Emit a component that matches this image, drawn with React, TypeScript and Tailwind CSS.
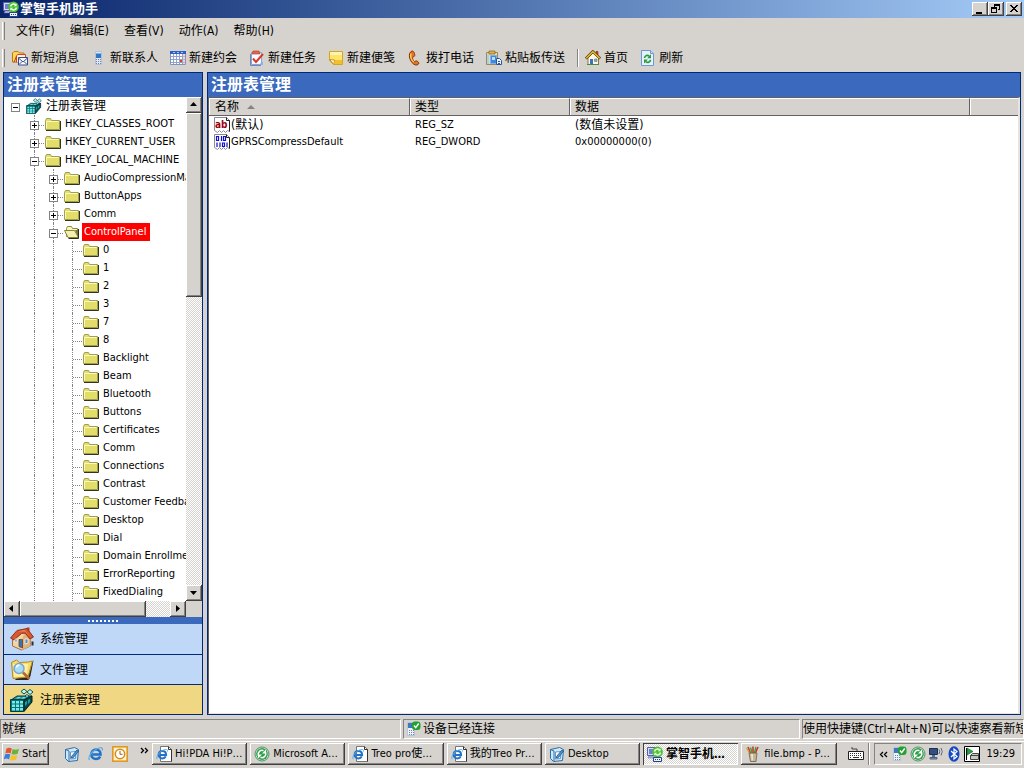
import type { ReactNode } from "react";
import clsx from "clsx";

const raised =
  "bg-[#d6d3ce] shadow-[inset_-1px_-1px_#404040,inset_1px_1px_#ffffff,inset_-2px_-2px_#848284]";
const checker =
  "bg-[conic-gradient(#ffffff_25%,#d6d3ce_0_50%,#ffffff_0_75%,#d6d3ce_0)] bg-[size:2px_2px]";

function Svg({ children, size = 16, box = 16 }: { children: ReactNode; size?: number; box?: number }) {
  return (
    <svg width={size} height={size} viewBox={`0 0 ${box} ${box}`} className="block shrink-0" aria-hidden>
      {children}
    </svg>
  );
}

/* ---------- icons ---------- */

const AppIcon = () => (
  <Svg>
    <path d="M0.5 1.5h9v8h-9z" fill="#d8dcf4" stroke="#5560a8" />
    <path d="M2 3h6v5H2z" fill="#6d7fd0" />
    <path d="M2 10h6l1 2H1z" fill="#b9bfe0" stroke="#5560a8" strokeWidth=".5" />
    <circle cx="10.500" cy="6" r="5.400" fill="#4fc035" />
    <path d="M7.500 5.500a3 3 0 0 1 5.300-1.300M13.500 6.500a3 3 0 0 1-5.300 1.300" stroke="#e8ffe0" strokeWidth="1.500" fill="none" />
    <path d="M13.600 2.500v2.800h-2.800zM7.300 9.600V6.800h2.800z" fill="#e8ffe0" />
    <path d="M6.500 11.500h8v4h-8z" fill="#eef2ff" stroke="#26418c" />
    <path d="M8 13h1v1H8zm2 0h1v1h-1zm2 0h1v1h-1z" fill="#26418c" />
  </Svg>
);

const MessageIcon = () => (
  <Svg>
    <path d="M.5 12V3l1.500-1.500h4L7.500 3H12v9z" fill="#ffd655" stroke="#b77c12" />
    <path d="M4.500 12.500V6l1-1.500h8V7" fill="#fff3d0" stroke="#d0432c" />
    <path d="M2 12.500 4.500 6" stroke="#c0392b" fill="none" />
    <path d="M6.500 7.500h9v7.500h-9z" fill="#f6f9ff" stroke="#3d4c86" />
    <path d="m6.500 8 4.500 4 4.500-4M7 14.500l3-3m5 3-3-3" fill="none" stroke="#3d4c86" />
  </Svg>
);

const PhoneIcon = () => (
  <Svg>
    <path d="M4.500 1.500h6v13h-6z" fill="#dfe7f3" stroke="#b4c2d6" />
    <path d="M5 3h5v5H5z" fill="#2f78c8" />
    <path d="M5 3h5v1H5z" fill="#79b3ea" />
    <path d="M5 9h1v1H5zm2 0h1v1H7zm2 0h1v1H9zm-4 2h1v1H5zm2 0h1v1H7zm2 0h1v1H9zm-4 2h1v1H5zm2 0h1v1H7zm2 0h1v1H9z" fill="#6b87ad" />
  </Svg>
);

const CalendarIcon = () => (
  <Svg>
    <path d="M.5 1.500h15v13H.5z" fill="#fff" stroke="#8194c4" />
    <path d="M0 1h16v3H0z" fill="#2c62c8" />
    <path d="M3 2h2v1H3zm4 0h2v1H7zm4 0h2v1h-2z" fill="#a9c7f5" />
    <path d="M3.500 4v10m3-10v10m3-10v10m3-10v10M1 6.500h14m-14 3h14m-14 3h14" stroke="#8fa3d0" fill="none" />
    <path d="M10 10h2v2h-2z" fill="#d8402d" />
    <path d="M13 4h2v10h-2z" fill="#f3b6a8" opacity=".6" />
  </Svg>
);

const TaskIcon = () => (
  <Svg>
    <path d="M2.500 2.500h10v12h-10z" fill="#f7f9ff" stroke="#8da3cf" />
    <path d="M1.500 4v11.500H12" fill="none" stroke="#7187b7" />
    <path d="M4 1h6l1 3H3z" fill="#e2674e" stroke="#a63b28" strokeWidth=".6" />
    <path d="m4 8.500 3 3.500L14 4" fill="none" stroke="#d53b27" strokeWidth="2" />
    <path d="m10 14.500 4-3v3.500z" fill="#8bb3e8" />
  </Svg>
);

const NoteIcon = () => (
  <Svg>
    <path d="M1.500 1.500h13v13h-9l-4-4z" fill="#ffe36a" stroke="#d7a519" />
    <path d="M2 2h12v3H2z" fill="#fff4ae" />
    <path d="m1.500 9.500 5 .5-.5 4.500z" fill="#fffbe0" stroke="#c5931a" />
    <path d="M7 10h7v4H6z" fill="#f4bf2c" />
  </Svg>
);

const CallIcon = () => (
  <Svg>
    <path
      d="M5 1C2.500 2 1.800 5 2.700 8.200c1 3.400 3.400 6.200 5.900 6.800 1.700.3 3.400-.8 3.200-2-.2-1-1.700-2.300-2.800-2.100-.9.200-.8.900-1.500.7C6.200 11 5.400 8.800 5.500 7.500c.1-.8 1.900-.7 2.200-1.700C8 4.300 6.800.6 5 1z"
      fill="#e8741a"
      stroke="#8a2f0c"
    />
    <path d="M4 3.500c-.8 2.500.2 6 2.700 8.600" fill="none" stroke="#ffd25a" strokeWidth="1.300" />
  </Svg>
);

const PasteIcon = () => (
  <Svg>
    <path d="M.5 2.500h11v12H.5z" fill="#e9d9a4" stroke="#a08a54" />
    <path d="M3 1h6v3H3z" fill="#e3b13b" stroke="#7c6630" strokeWidth=".7" />
    <path d="M1 4h2v10H1z" fill="#a8d0f6" />
    <path d="M4.500 5.500h6v8h-6z" fill="#3f88dc" stroke="#7db2ea" />
    <path d="M6 7h3v3H6z" fill="#b9ddff" />
    <path d="M10.500 8.500h3l2 2v4h-5z" fill="#eaf2ff" stroke="#29549c" />
    <path d="M12 11h2v1h-2zm0 2h2v1h-2z" fill="#29549c" />
  </Svg>
);

const HomeIcon = () => (
  <Svg>
    <path d="M11 1.500h2v5h-2z" fill="#c64a2f" stroke="#6e2a1b" strokeWidth=".6" />
    <path d="M3 8 8 3l5.500 5v6.500H3z" fill="#fff8e0" stroke="#6b5a2c" strokeWidth=".8" />
    <path d="m.8 8.500 7-7 7.400 7" fill="none" stroke="#5c4408" strokeWidth="2.600" />
    <path d="m1.200 8.200 6.600-6.500 7 6.500" fill="none" stroke="#f3be3a" strokeWidth="1.200" />
    <path d="M5 9h3v5.500H5z" fill="#3975b9" />
    <path d="M9.500 9h2.500v2.500H9.500z" fill="#7cb7ea" stroke="#4d5a6b" strokeWidth=".5" />
    <path d="M2 14.500h12" stroke="#4c8c32" />
  </Svg>
);

const RefreshIcon = () => (
  <Svg>
    <path d="M1.500.5h9l3 3v12h-12z" fill="#e4f2ff" stroke="#6f98cf" />
    <path d="M10.500.5v3h3" fill="#bcd8f5" stroke="#6f98cf" />
    <path d="M4.500 8c.3-2.500 3-3.300 4.700-1.800" stroke="#2a9a34" strokeWidth="1.600" fill="none" />
    <path d="M11 4.300v4H7.200zM4 13.500v-4h3.800z" fill="#2a9a34" />
    <path d="M10.500 9.800c-.3 2.500-3 3.300-4.700 1.800" stroke="#2a9a34" strokeWidth="1.600" fill="none" />
  </Svg>
);

const FolderIcon = ({ open = false }: { open?: boolean }) => (
  <Svg>
    {open ? (
      <>
        <path d="M2.500 12.500v-8l1-2h4l1 2h5v8z" fill="#f7f6c4" stroke="#8c8a3a" />
        <path d="M.5 6.500h10l4 7H4z" fill="#f4f1b0" stroke="#85833a" />
        <path d="M11 6h3v7z" fill="#77763c" />
        <path d="M14.500 5v9.500H4.500" fill="none" stroke="#2b2b1a" />
      </>
    ) : (
      <>
        <path d="M.5 13.500v-9l1-2h4l1 2h8v9z" fill="#e3de6a" stroke="#a09e50" />
        <path d="M1.500 12.500v-7h12" fill="none" stroke="#fbf9c0" />
        <path d="M15.500 5v9.500H1" fill="none" stroke="#33331c" />
      </>
    )}
  </Svg>
);

const RegistryIcon = ({ size = 16 }: { size?: number }) => (
  <Svg size={size} box={24}>
    <path d="m1 12 6-4h15l-8 4z" fill="#1c9896" stroke="#023c40" />
    <path d="m14 12 8-4v6l-8 9.500z" fill="#06494d" stroke="#011f22" />
    <path d="M.5 11.500h13v12H.5z" fill="#067478" stroke="#023c40" />
    <path
      d="M2 13h3v2.500H2zm4 0h3v2.500H6zm4 0h3v2.500h-3zM2 16.500h3V19H2zm4 0h3V19H6zm4 0h3V19h-3zM2 20h3v2.500H2zm4 0h3v2.500H6zm4 0h3v2.500h-3z"
      fill="#7be9e6"
    />
    <path d="m6 10.500 2-1.500h3l-2 1.500zm5 0L13 9h3l-2 1.500z" fill="#6fe0de" />
    <path d="m15 14 2-1v3l-2 2zm3-2 2-1v3l-2 2z" fill="#1ea09e" />
    <path d="m11 3.500 3-2.500 3 2.500L14 6zM17 4l3-2.500L23 4l-3 2.500zM15 8l2-1.500L19 8l-2 1.500z" fill="#b8f5f2" stroke="#035257" />
  </Svg>
);

const HouseLarge = () => (
  <Svg size={24} box={24}>
    <path d="M2.500 11v8l9 4 9-4v-9l-9-6z" fill="#f3d3a2" stroke="#9b7148" />
    <path d="m12 23 8.500-4v-9L14 7l-2 6z" fill="#e0b27c" />
    <path d="M.5 11 7 3.500 17 1.500 23.500 10 20 12l-5-6-3.500.5L4 13z" fill="#d9562f" stroke="#93311a" />
    <path d="m7.500 4.500 7-1.500 5 6-4.500-4.500z" fill="#f08a5e" />
    <path d="M9 12.500h3.500V21L9 19.500z" fill="#3f74a8" stroke="#5b3a22" strokeWidth=".7" />
    <path d="M15 12h3v4l-3 1z" fill="#5b8fc4" stroke="#fff" strokeWidth=".7" />
    <path d="M5 12h2v3H5z" fill="#5b8fc4" stroke="#fff" strokeWidth=".6" />
    <path d="M17 .5h2.500v5L17 3z" fill="#b23b20" />
    <path d="M21.500 14.500h2v4h-2z" fill="#342a20" />
  </Svg>
);

const FileSearchLarge = () => (
  <Svg size={24} box={24}>
    <path d="m19 5 4.500-2.500L20.500 18l-2 4L5 22z" fill="#2d2b20" />
    <path d="m1.500 4.500 5-2.500 3 2.500 9-.5 4-1-4.500 16-15 1.500z" fill="#f7dc6b" stroke="#b38a1e" />
    <path d="m3 6 15 0-1.500 12L4 19z" fill="#fff0a6" />
    <circle cx="9" cy="10.500" r="5" fill="#a9def8" stroke="#7ba6cc" strokeWidth="1.500" />
    <path d="M6.500 9.500a3 3 0 0 1 3-2.500" stroke="#fff" strokeWidth="1.500" fill="none" />
    <path d="m13 14.500 6.500 6.500" stroke="#b2673b" strokeWidth="2.600" />
  </Svg>
);

const page = "M.5.5h12l3 3v11l-2-1-2 2-2-2-2 2-2-2-2 2-3-2z";

const StringIcon = () => (
  <Svg>
    <path d={page} fill="#fff" stroke="#8a8a94" />
    <path d="M12.500.5v3h3v11" fill="none" stroke="#202020" />
    <text x="1" y="11" fontSize="10" fontWeight="700" fontFamily="DejaVu Sans Condensed, sans-serif" fill="#9c0010">
      ab
    </text>
  </Svg>
);

const BinaryIcon = () => (
  <Svg>
    <path d={page} fill="#fff" stroke="#8a8a94" />
    <path d="M12.500.5v3h3v11" fill="none" stroke="#202020" />
    {/* two rows of bits */}
    <path
      d="M2.500 2.500h2v4h-2zM7.500 2v5M9.500 2.500h2v4h-2zM3 8.500V13M6 8.500V13M8.500 9h2v3.500h-2zM13 8.500V13"
      fill="none"
      stroke="#1010d0"
      strokeWidth="1.200"
    />
  </Svg>
);

const DeviceOkIcon = () => (
  <Svg>
    <path d="M1.500 1.500h7v13h-7z" fill="#eef3fb" stroke="#b9c5d6" />
    <path d="M2 2h6v5H2z" fill="#3f78bd" />
    <path d="M3 9h1v1H3zm2 0h1v1H5zm2 0h1v1H7zm-4 2h1v1H3zm2 0h1v1H5zm2 0h1v1H7zm-4 2h1v1H3zm2 0h1v1H5zm2 0h1v1H7z" fill="#6f86a8" />
    <rect x="6" y=".5" width="8.500" height="8.500" rx="3" fill="#23a032" />
    <path d="m8 4.500 1.700 2.200 3-4.200" fill="none" stroke="#fff" strokeWidth="1.400" />
  </Svg>
);

const WindowsFlag = () => (
  <Svg>
    <path d="M2.500 2.500C4.500 1.300 6 1.500 7.800 2.600L6.600 7.500C5 6.500 3.500 6.400 1.300 7.400z" fill="#e8552b" />
    <path d="M8.700 3c2 .9 3.800.9 6.300-.2l-1.300 5C11.500 8.800 9.500 8.800 7.500 8z" fill="#67b33c" />
    <path d="M1 8.400c2.200-1 3.800-.9 5.300.1L5 13.400C3.500 12.400 1.900 12.300-.2 13.300z" fill="#3b7fd8" />
    <path d="M7.200 9c2 .9 4 .9 6.200-.1l-1.300 4.900c-2.200 1-4.200 1-6.200.1z" fill="#f5c22c" />
  </Svg>
);

const DesktopIcon = () => (
  <Svg>
    <path d="m1.500 3.500 9-2 4 2-1 11-9 1-3-3z" fill="#cfe8fa" stroke="#2c6fa8" />
    <path d="M1.500 3.500 5 5v10.500" fill="none" stroke="#2c6fa8" />
    <path d="m6.500 6 5.500-.5-.5 7-5 .5z" fill="#fff" stroke="#6796c0" />
    <path d="M7.500 10.500 13 4l1.500 1-5 6.500-2 .5z" fill="#4a9be0" stroke="#1c4f84" strokeWidth=".8" />
  </Svg>
);

const EGlyph = () => (
  <>
    <path
      d="M12.200 10.500c-.8 1.600-2.300 2.500-4.200 2.500-2.800 0-4.700-2-4.700-4.700S5.300 3.600 8 3.600s4.600 2 4.600 5H4.800"
      fill="none"
      stroke="#2173c9"
      strokeWidth="2.500"
    />
    <path d="M1.500 14C-.5 11.500 3.500 5 9 2.700c4-1.700 6.200-1 5.200 1.800" fill="none" stroke="#5aa9ea" strokeWidth="1.200" />
  </>
);

const IeIcon = () => (
  <Svg>
    <EGlyph />
  </Svg>
);

const IePageIcon = () => (
  <Svg>
    <path d="M4.500.5h8l3 3v12h-11z" fill="#fff" stroke="#777" />
    <path d="M12.500.5v3h3v12" fill="none" stroke="#333" />
    <g transform="translate(0 2) scale(.8)">
      <EGlyph />
    </g>
  </Svg>
);

const ClockIcon = () => (
  <Svg>
    <rect x=".8" y=".8" width="14.400" height="14.400" fill="#fff1c8" stroke="#dd9826" strokeWidth="1.600" />
    <circle cx="8" cy="8" r="4.700" fill="#fff" stroke="#d4871b" strokeWidth="1.500" />
    <path d="M8 5v3.300h2.500" fill="none" stroke="#a35e0c" />
  </Svg>
);

const SyncIcon = () => (
  <Svg>
    <circle cx="8" cy="8" r="7" fill="#e4f4e4" stroke="#4f8f5e" />
    <circle cx="8" cy="8" r="5.900" fill="#2f9e4b" />
    <path d="M4.300 9.500C3.500 6 6.500 3.500 9.500 4.700M11.700 6.500c.8 3.500-2.200 6-5.200 4.800" fill="none" stroke="#fff" strokeWidth="1.500" />
    <path d="M12 3.500v4H8zM4 12.500v-4h4z" fill="#fff" />
  </Svg>
);

const PaintIcon = () => (
  <Svg>
    <path d="m3 1 3 7M8 .5V8m5-7-3 7" stroke="#c8382b" strokeWidth="1.600" />
    <path d="m5.500 1.500 2 6M11 1 9 8" stroke="#3c9a3c" strokeWidth="1.300" />
    <path d="M1.500 2 5 8" stroke="#d8a62a" strokeWidth="1.300" />
    <path d="M4 7h8l-1 8.500H5.500z" fill="#c4b79c" stroke="#6e5d48" strokeWidth=".8" />
    <path d="M6 8h2v6.500H6.500z" fill="#eee4cb" />
  </Svg>
);

const KeyboardIcon = () => (
  <Svg>
    <path d="M4 1v2h5v2" fill="none" stroke="#404040" />
    <path d="M.5 5.500h15v8H.5z" fill="#fff" stroke="#202020" />
    <path d="M2 7.500h12M2 9.500h12" stroke="#303030" strokeDasharray="1 1" />
    <path d="M2 11.500h1m2 0h6m2 0h1" stroke="#303030" />
  </Svg>
);

const NetworkIcon = () => (
  <Svg>
    <path d="M1.500 2.500h8v6h-8z" fill="#34507e" stroke="#1e2f52" />
    <path d="M4 9h3v2H4z" fill="#5b6e92" />
    <path d="M2 11.500h7v1.500H2z" fill="#8797b3" stroke="#4f6082" />
    <path d="M11 3.500q1.500 2 0 4.500M13 2q2.500 3.500 0 7.500" fill="none" stroke="#59677f" />
  </Svg>
);

const BluetoothIcon = () => (
  <Svg>
    <ellipse cx="8" cy="8" rx="5.500" ry="7.800" fill="#1648c4" />
    <path d="m5 5 6 5.500L8 13V3l3 2.500L5 11" fill="none" stroke="#fff" strokeWidth="1.200" />
  </Svg>
);

const DriveIcon = () => (
  <Svg>
    <path d="M.5.5h15v15H.5z" fill="#fff" stroke="#000" />
    <path d="M2.500 2v12" stroke="#000" />
    <path d="m3 2 6 3.500L3 9z" fill="#24a13c" stroke="#0b5d1d" strokeWidth=".6" />
    <path d="m6.500 9.500 2-2h6v6h-8z" fill="#c9c9c0" stroke="#444" />
    <path d="M6.500 9.500h8" stroke="#444" />
  </Svg>
);

/* ---------- data ---------- */

const menus = ["文件(F)", "编辑(E)", "查看(V)", "动作(A)", "帮助(H)"];

const tools = [
  { label: "新短消息", icon: <MessageIcon /> },
  { label: "新联系人", icon: <PhoneIcon /> },
  { label: "新建约会", icon: <CalendarIcon /> },
  { label: "新建任务", icon: <TaskIcon /> },
  { label: "新建便笺", icon: <NoteIcon /> },
  { label: "拨打电话", icon: <CallIcon /> },
  { label: "粘贴板传送", icon: <PasteIcon /> },
];

const navTools = [
  { label: "首页", icon: <HomeIcon /> },
  { label: "刷新", icon: <RefreshIcon /> },
];

type Node = { label: string; level: number; toggle?: "+" | "-"; selected?: boolean };

const nodes: Node[] = [
  { label: "注册表管理", level: 0, toggle: "-" },
  { label: "HKEY_CLASSES_ROOT", level: 1, toggle: "+" },
  { label: "HKEY_CURRENT_USER", level: 1, toggle: "+" },
  { label: "HKEY_LOCAL_MACHINE", level: 1, toggle: "-" },
  { label: "AudioCompressionManager", level: 2, toggle: "+" },
  { label: "ButtonApps", level: 2, toggle: "+" },
  { label: "Comm", level: 2, toggle: "+" },
  { label: "ControlPanel", level: 2, toggle: "-", selected: true },
  ...[
    "0", "1", "2", "3", "7", "8", "Backlight", "Beam", "Bluetooth", "Buttons", "Certificates",
    "Comm", "Connections", "Contrast", "Customer Feedback", "Desktop", "Dial",
    "Domain Enrollment", "ErrorReporting", "FixedDialing",
  ].map((label) => ({ label, level: 3 })),
];

const sections = [
  { label: "系统管理", icon: <HouseLarge /> },
  { label: "文件管理", icon: <FileSearchLarge /> },
  { label: "注册表管理", icon: <RegistryIcon size={24} />, active: true },
];

const values = [
  { name: "(默认)", type: "REG_SZ", data: "(数值未设置)", icon: <StringIcon />, cjk: true },
  { name: "GPRSCompressDefault", type: "REG_DWORD", data: "0x00000000(0)", icon: <BinaryIcon /> },
];

const tasks = [
  { label: "Hi!PDA Hi!PDA", icon: <IePageIcon /> },
  { label: "Microsoft ActiveSync", icon: <SyncIcon /> },
  { label: "Treo pro使用手册", icon: <IePageIcon /> },
  { label: "我的Treo Pro手机", icon: <IePageIcon /> },
  { label: "Desktop", icon: <DesktopIcon /> },
  { label: "掌智手机助手", icon: <AppIcon />, active: true },
  { label: "file.bmp - Paint", icon: <PaintIcon /> },
];

/* ---------- parts ---------- */

function Grip() {
  return <div className="h-[18px] w-[3px] shrink-0 border-r border-l border-r-[#848284] border-l-white" />;
}

function ToolButton({ label, icon }: { label: string; icon: ReactNode }) {
  return (
    <button type="button" className="flex shrink-0 items-center gap-[3px]">
      {icon}
      {label}
    </button>
  );
}

function WindowButton({ label, children }: { label: string; children: ReactNode }) {
  return (
    <button type="button" aria-label={label} className={clsx("h-[14px] w-4", raised)}>
      <svg width="16" height="14" viewBox="0 0 16 14" shapeRendering="crispEdges" aria-hidden>
        {children}
      </svg>
    </button>
  );
}

const arrows = {
  up: "M4 9h7L7.500 5z",
  down: "M4 6h7l-3.500 4z",
  left: "M9 4v7L5 7.500z",
  right: "M6 4v7l4-3.500z",
};

function ArrowButton({ dir }: { dir: keyof typeof arrows }) {
  return (
    <button type="button" aria-label={`scroll ${dir}`} className={clsx("size-4 shrink-0", raised)}>
      <Svg>
        <path d={arrows[dir]} />
      </Svg>
    </button>
  );
}

function TreeRow({ node }: { node: Node }) {
  return (
    <li role="treeitem" aria-selected={!!node.selected} className="flex h-[18px] items-center pl-0.5 whitespace-nowrap">
      {Array.from({ length: node.level + 1 }, (_, i) => {
        const own = i === node.level;
        return (
          <span key={i} className="relative flex h-full w-[19px] shrink-0 pl-[9px]">
            {i > 0 && <span className="h-full border-l border-dotted border-[#848284]" />}
            {own && i > 0 && <span className="mt-[10px] h-0 flex-1 border-t border-dotted border-[#848284]" />}
            {own && node.toggle && (
              <button
                type="button"
                aria-label={node.toggle === "+" ? "expand" : "collapse"}
                className="absolute top-[6px] left-[5px] size-[9px] border border-[#848284] bg-white"
              >
                <svg width="7" height="7" viewBox="0 0 7 7" shapeRendering="crispEdges" className="block" aria-hidden>
                  <path d={node.toggle === "+" ? "M1 3h5v1H1zM3 1h1v5H3z" : "M1 3h5v1H1z"} />
                </svg>
              </button>
            )}
          </span>
        );
      })}
      <span className="ml-px shrink-0">
        {node.level === 0 ? <RegistryIcon /> : <FolderIcon open={node.selected} />}
      </span>
      <span
        className={clsx(
          "ml-0.5 h-full px-0.5 leading-[18px]",
          node.level === 0 && "text-xs",
          node.selected && "bg-[#ff0000] pr-1 text-white",
        )}
      >
        {node.label}
      </span>
    </li>
  );
}

function Sidebar() {
  return (
    <aside className="flex w-[200px] shrink-0 flex-col border border-[#00287b] bg-[#3a69bd]">
      <h2 className="h-6 shrink-0 pl-[3px] text-base leading-6 font-bold text-white">注册表管理</h2>
      <div className="flex min-h-0 flex-1 bg-white">
        <ul role="tree" className="min-w-0 flex-1 overflow-hidden">
          {nodes.map((node, i) => (
            <TreeRow key={i} node={node} />
          ))}
        </ul>
        <div className={clsx("flex w-4 shrink-0 flex-col", checker)}>
          <ArrowButton dir="up" />
          <div className={clsx("mb-auto h-[184px] shrink", raised)} />
          <ArrowButton dir="down" />
        </div>
      </div>
      <div className="flex h-4 shrink-0 bg-[#d6d3ce]">
        <div className={clsx("flex min-w-0 flex-1", checker)}>
          <ArrowButton dir="left" />
          <div className={clsx("mr-auto w-[126px]", raised)} />
          <ArrowButton dir="right" />
        </div>
        <div className="w-4" />
      </div>
      <div className="flex h-[7px] shrink-0 items-center justify-center gap-0.5">
        {Array.from({ length: 8 }, (_, i) => (
          <span key={i} className="size-0.5 bg-white" />
        ))}
      </div>
      <nav className="shrink-0">
        {sections.map((s, i) => (
          <button
            key={s.label}
            type="button"
            className={clsx(
              "flex h-[30px] w-full items-center gap-1.5 border-[#00287b] pl-1.5 text-xs",
              i > 0 && "border-t",
              s.active ? "bg-[#efd784]" : "bg-[#c0d8f8]",
            )}
          >
            {s.icon}
            {s.label}
          </button>
        ))}
      </nav>
    </aside>
  );
}

const headCell =
  "h-[18px] border-t border-r border-b border-t-white border-r-[#636163] border-b-[#636163] p-0 pl-[5px] text-left text-xs leading-4 font-normal shadow-[inset_1px_0_#ffffff]";

function ValueList() {
  return (
    <main className="flex min-w-0 flex-1 flex-col border border-[#00287b] bg-[#3a69bd]">
      <h2 className="h-6 shrink-0 pl-[3px] text-base leading-6 font-bold text-white">注册表管理</h2>
      <div className="min-h-0 flex-1 border-t border-r-2 border-b border-l border-[#636163] border-r-[#e7e3de] border-b-[#e7e3de] bg-white">
        <table className="w-full table-fixed border-separate border-spacing-0">
          <colgroup>
            <col className="w-[201px]" />
            <col className="w-[160px]" />
            <col className="w-[400px]" />
            <col />
          </colgroup>
          <thead className="bg-[#d6d3ce]">
            <tr>
              <th className={headCell}>
                <span className="flex items-center gap-2 pl-px">
                  名称
                  <svg width="8" height="4" viewBox="0 0 8 4" aria-hidden>
                    <path d="M0 4h8L4 0z" fill="#848284" />
                  </svg>
                </span>
              </th>
              <th className={headCell}>类型</th>
              <th className={headCell}>数据</th>
              <th className={clsx(headCell, "border-r-0")} aria-label="blank" />
            </tr>
          </thead>
          <tbody>
            {values.map((v) => (
              <tr key={v.name}>
                <td className="p-0 pl-[5px]">
                  <span className={clsx("flex h-[17px] items-center gap-px whitespace-nowrap", v.cjk && "text-xs")}>
                    {v.icon}
                    {v.name}
                  </span>
                </td>
                <td className="p-0 pl-[5px] leading-[17px]">{v.type}</td>
                <td className="p-0 pl-[5px]">
                  <span className={clsx("flex h-[17px] items-center", v.cjk && "text-xs")}>{v.data}</span>
                </td>
                <td className="p-0" />
              </tr>
            ))}
          </tbody>
        </table>
      </div>
    </main>
  );
}

const pane =
  "flex items-center border border-t-[#848284] border-l-[#848284] border-r-white border-b-white overflow-hidden whitespace-nowrap";

function Taskbar() {
  return (
    <footer className="flex h-[27px] shrink-0 items-start border-t border-white pt-px pr-0.5 pl-0.5">
      <button type="button" className={clsx("flex h-[22px] w-[47px] items-center gap-0.5 pl-0.5", raised)}>
        <WindowsFlag />
        Start
      </button>
      <div className="ml-[15px] flex h-[22px] items-center gap-2">
        <button type="button" aria-label="Show desktop">
          <DesktopIcon />
        </button>
        <button type="button" aria-label="Internet Explorer">
          <IeIcon />
        </button>
        <button type="button" aria-label="Clock">
          <ClockIcon />
        </button>
      </div>
      <button type="button" aria-label="more" className="mr-[3px] ml-3 h-[14px] w-[9px]">
        <svg width="9" height="7" viewBox="0 0 9 7" className="block" aria-hidden>
          <path d="m1 1 2.500 2.500L1 6m4-5 2.500 2.500L5 6" fill="none" stroke="#000" strokeWidth="1.300" />
        </svg>
      </button>
      <div className="flex min-w-0 flex-1 gap-[3px]">
        {tasks.map((t) => (
          <button
            key={t.label}
            type="button"
            className={clsx(
              "flex h-[22px] min-w-0 flex-1 items-center gap-[3px] px-1 text-left",
              t.active
                ? clsx(checker, "text-xs font-bold shadow-[inset_1px_1px_#404040,inset_-1px_-1px_#ffffff]")
                : raised,
            )}
          >
            {t.icon}
            <span className="truncate">{t.label}</span>
          </button>
        ))}
      </div>
      <div className="ml-3 flex h-[22px] items-center">
        <KeyboardIcon />
      </div>
      <div className="mr-1 ml-1 h-[22px] w-0.5 border-r border-l border-l-[#848284] border-r-white" />
      <div className={clsx(pane, "h-[22px] shrink-0 gap-0.5 pr-1.5 pl-1")}>
        <svg width="9" height="7" viewBox="0 0 9 7" className="mr-0.5" aria-hidden>
          <path d="M4 1 1.500 3.500 4 6m4-5L5.500 3.500 8 6" fill="none" stroke="#000" strokeWidth="1.300" />
        </svg>
        <DeviceOkIcon />
        <SyncIcon />
        <NetworkIcon />
        <BluetoothIcon />
        <DriveIcon />
        <time className="ml-1">19:29</time>
      </div>
    </footer>
  );
}

export default function App() {
  return (
    <div className="flex h-screen flex-col overflow-hidden bg-[#d6d3ce] font-['DejaVu_Sans_Condensed','Noto_Sans_CJK_SC',sans-serif] text-[11px] leading-4 text-black">
      <header className="flex h-[18px] shrink-0 items-center bg-linear-to-r from-[#0a246a] to-[#a5cbf7] pr-0.5 pl-[3px]">
        <AppIcon />
        <h1 className="ml-px flex-1 text-[13px] leading-[18px] font-bold text-white">掌智手机助手</h1>
        <WindowButton label="Minimize">
          <path d="M4 10h6v2H4z" />
        </WindowButton>
        <WindowButton label="Restore">
          <path d="M6 2h6v6h-2V7h1V4H7v1H6zM3 5h6v6H3zm1 2v3h4V7z" fillRule="evenodd" />
        </WindowButton>
        <span className="w-0.5" />
        <WindowButton label="Close">
          <path d="M4 3h2v1h1v1h2V4h1V3h2v1h-1v1h-1v1H9v1h1v1h1v1h1v1h-2V9H9V8H7v1H6v1H4V9h1V8h1V7h1V6H6V5H5V4H4z" />
        </WindowButton>
      </header>

      <nav className="mt-[3px] flex h-5 shrink-0 items-center pl-0.5 text-xs">
        <Grip />
        <div className="ml-[11px] flex gap-[15px]">
          {menus.map((m) => (
            <button key={m} type="button">
              {m}
            </button>
          ))}
        </div>
      </nav>

      <div role="toolbar" className="mt-[3px] mb-px flex h-[27px] shrink-0 items-center pl-0.5 text-xs">
        <Grip />
        <div className="ml-[7px] flex items-center gap-3">
          {tools.map((t) => (
            <ToolButton key={t.label} {...t} />
          ))}
          <div className="-mr-[6px] h-[18px] w-0.5 border-r border-l border-l-[#848284] border-r-white" />
          {navTools.map((t) => (
            <ToolButton key={t.label} {...t} />
          ))}
        </div>
      </div>

      <div className="flex min-h-0 flex-1 gap-1 pr-[3px] pl-[3px]">
        <Sidebar />
        <ValueList />
      </div>

      <div className="mt-1 flex h-5 shrink-0 gap-0.5 text-xs">
        <div className={clsx(pane, "w-[401px] pl-px")}>就绪</div>
        <div className={clsx(pane, "min-w-0 flex-1 gap-px pl-0.5")}>
          <DeviceOkIcon />
          设备已经连接
        </div>
        <div className={clsx(pane, "w-[222px]")}>使用快捷键(Ctrl+Alt+N)可以快速察看新短信</div>
      </div>
      <div className="h-0.5 shrink-0" />
      <Taskbar />
    </div>
  );
}
